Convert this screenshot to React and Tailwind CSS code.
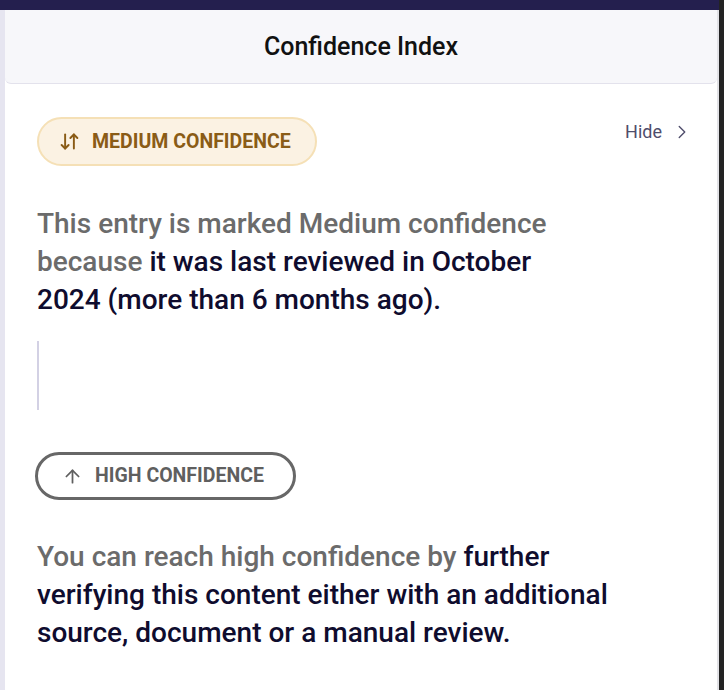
import { ArrowDownUp, ArrowUp, ChevronRight } from 'lucide-react';

const App = () => {
  return (
    <div className="flex h-[690px] w-[724px] overflow-hidden bg-[#232323] font-['Roboto',sans-serif]">
      <div className="flex w-[719px] flex-col">
        <div className="h-[10px] bg-[#241f4e]" />
        <div className="flex flex-1">
          <div className="w-[5px] bg-[#e6e5f0]" />
          <div className="flex flex-1 flex-col border-r-2 border-[#e2e2e6] bg-white">
            <div className="flex h-[74px] items-center justify-center rounded-b-md border-b border-[#e3e2ec] bg-[#f7f7fa]">
              <h1 className="text-[25px] font-medium text-[#111111]">Confidence Index</h1>
            </div>

            <div className="px-8 pt-[33px]">
              <div className="flex items-start justify-between">
                <div className="flex h-[49px] items-center gap-3 rounded-full border-2 border-[#f5e0b6] bg-[#fbf2e3] pl-5 pr-6">
                  <ArrowDownUp size={21} strokeWidth={2.2} className="text-[#8a5c16]" />
                  <span className="text-[19.5px] font-bold uppercase text-[#8a5c16]">Medium confidence</span>
                </div>
                <button className="mr-[-8px] mt-[1px] flex items-center gap-[9px] text-[18px] text-[#4f4d6b]">
                  Hide
                  <ChevronRight size={22} strokeWidth={1.5} />
                </button>
              </div>

              <p className="mt-[39px] w-[530px] text-[28px] font-medium leading-[38px] text-[#6b6b6b]">
                This entry is marked Medium confidence because{' '}
                <span className="text-[#0f0c2e]">it was last reviewed in October 2024 (more than 6 months ago).</span>
              </p>

              <div className="mt-[22px] h-[69px] w-[2px] bg-[#d3d1e4]" />

              <div className="mt-[42px] -ml-[2px] flex h-[48px] w-[261px] items-center gap-3 rounded-full border-[3px] border-[#676767] pl-[24px]">
                <ArrowUp size={21} strokeWidth={2} className="text-[#5f5f5f]" />
                <span className="text-[19.5px] font-bold uppercase text-[#5f5f5f]">High confidence</span>
              </div>

              <p className="mt-[38px] w-[600px] text-[28px] font-medium leading-[38px] text-[#6b6b6b]">
                You can reach high confidence by{' '}
                <span className="text-[#0f0c2e]">further verifying this content either with an additional source, document or a manual review.</span>
              </p>
            </div>
          </div>
        </div>
      </div>
      <div className="flex-1 bg-[#232323]" />
    </div>
  );
};

export default App;
